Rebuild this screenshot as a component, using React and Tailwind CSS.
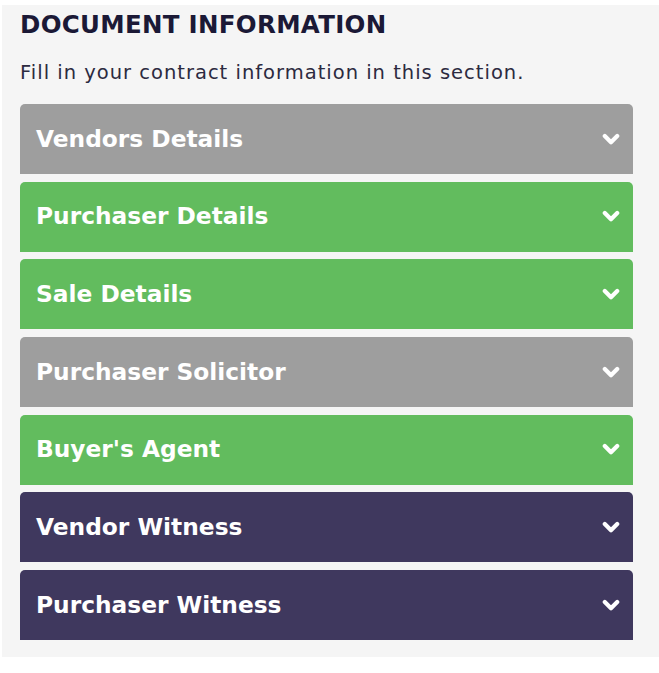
const sections = [
  { label: 'Vendors Details', color: 'bg-[#9e9e9e]' },
  { label: 'Purchaser Details', color: 'bg-[#62bc5e]' },
  { label: 'Sale Details', color: 'bg-[#62bc5e]' },
  { label: 'Purchaser Solicitor', color: 'bg-[#9e9e9e]' },
  { label: "Buyer's Agent", color: 'bg-[#62bc5e]' },
  { label: 'Vendor Witness', color: 'bg-[#3f385e]' },
  { label: 'Purchaser Witness', color: 'bg-[#3f385e]' },
]

const Chevron = () => (
  <svg width="18" height="13" viewBox="0 0 18 13" fill="none">
    <polyline points="2.8,3 9,9.2 15.2,3" stroke="white" strokeWidth="4.2" strokeLinecap="round" strokeLinejoin="round" />
  </svg>
)

export default function App() {
  return (
    <div className="bg-white h-[673px] pt-[5px] pl-[2px]" style={{ fontFamily: '"DejaVu Sans", "Liberation Sans", sans-serif' }}>
      <div className="bg-[#f5f5f5] h-[652px] pl-[18px] pr-[26px] pt-[4px]">
        <h2 className="text-[24.5px] leading-[32px] font-bold tracking-[0.3px] text-[#1b1936]">DOCUMENT INFORMATION</h2>
        <p className="mt-[20px] text-[19.5px] leading-[24px] tracking-[1px] text-[#2c2a40]">Fill in your contract information in this section.</p>

        {/* accordion headers */}
        <div className="mt-[19px] flex flex-col gap-[7.7px]">
          {sections.map((s, idx) => (
            <div key={idx} className={`${s.color} h-[70px] rounded-t-[5px] flex items-center justify-between pl-[16px] pr-[13px]`}>
              <span className="text-white text-[23.3px] font-bold">{s.label}</span>
              <Chevron />
            </div>
          ))}
        </div>
      </div>
    </div>
  )
}
